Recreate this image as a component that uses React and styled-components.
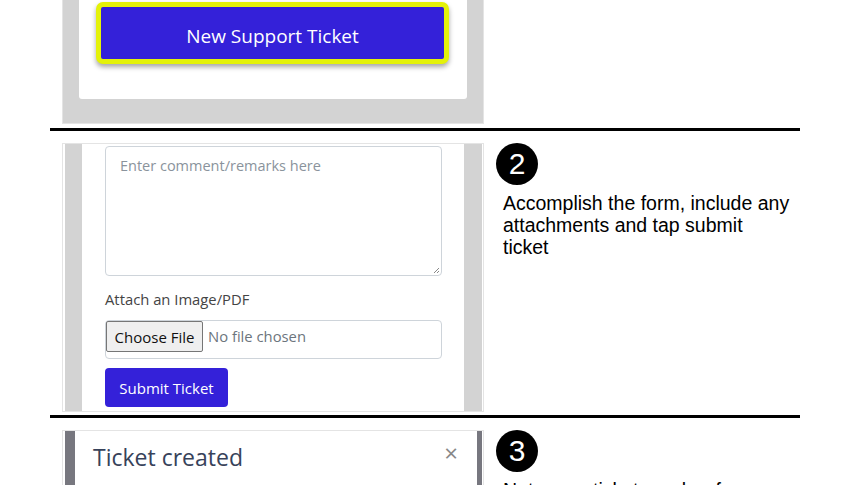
import React from "react";
import styled, { createGlobalStyle } from "styled-components";

const GlobalStyle = createGlobalStyle`
  html, body {
    margin: 0;
    padding: 0;
    background: #ffffff;
    overflow: hidden;
  }
  body {
    font-family: "Liberation Sans", Arial, sans-serif;
  }
`;

const Page = styled.div`
  width: 750px;
  margin: 0 0 0 50px;
`;

const Row = styled.div`
  display: flex;
  padding: ${(p) => (p.first ? "0" : "12px")} 0 ${(p) => p.bottom || 3}px 0;
  border-bottom: 3px solid #000;
`;

const ShotCell = styled.div`
  width: 434px;
  padding-left: 12px;
  flex-shrink: 0;
`;

const StepCell = styled.div`
  flex: 1;
`;

const Badge = styled.div`
  width: 42px;
  height: 42px;
  border-radius: 50%;
  background: #000;
  color: #fff;
  display: flex;
  align-items: center;
  justify-content: center;
  font-size: 30px;
  line-height: 1;
`;

const StepText = styled.p`
  margin: 7px 0 0 7px;
  width: 288px;
  font-size: 19.5px;
  line-height: 22px;
  color: #000;
`;

/* screenshot frames */
const Frame = styled.div`
  width: 422px;
  box-sizing: border-box;
  height: ${(p) => p.h}px;
  background: ${(p) => p.bg || "#d3d3d3"};
  border: 1px solid #e4e4e4;
  border-top: ${(p) => (p.noTop ? "none" : "1px solid #e4e4e4")};
  display: flex;
  padding: 0 ${(p) => p.side || 0}px 0 ${(p) => p.left || 0}px;
  font-family: "Open Sans", "Segoe UI", sans-serif;
  overflow: hidden;
`;

const TopCard = styled.div`
  margin: 0 16px 24px 16px;
  flex: 1;
  background: #fff;
  border-radius: 0 0 3px 3px;
  padding: 2px 18px 0 17px;
`;

const BigButton = styled.button`
  width: 100%;
  height: 62px;
  box-sizing: border-box;
  background: #3421d9;
  border: 5px solid #e4f209;
  border-radius: 7px;
  color: #fff;
  font-family: "Open Sans", "Segoe UI", sans-serif;
  font-size: 19px;
  box-shadow: 0 3px 5px rgba(0, 0, 0, 0.35);
  padding: 5px 0 0;
`;

const Strip = styled.div`
  width: ${(p) => p.w}px;
  background: ${(p) => p.c};
  flex-shrink: 0;
`;

const FormArea = styled.div`
  flex: 1;
  background: #fff;
  padding: 2px 22px 0 23px;
  display: flex;
  flex-direction: column;
`;

const TextArea = styled.div`
  height: 130px;
  border: 1px solid #ced4da;
  border-radius: 4px;
  padding: 9px 14px;
  box-sizing: border-box;
  color: #8a939c;
  font-size: 14.5px;
  position: relative;
`;

const Grip = styled.span`
  position: absolute;
  right: 2px;
  bottom: 2px;
  width: 5px;
  height: 5px;
  background: linear-gradient(135deg, transparent 45%, #888 50%, transparent 60%, transparent 75%, #888 80%, transparent 90%);
`;

const Label = styled.div`
  margin-top: 13px;
  font-size: 14.8px;
  color: #444;
  line-height: 20px;
`;

const FileBox = styled.div`
  margin-top: 11px;
  height: 39px;
  box-sizing: border-box;
  border: 1px solid #ced4da;
  border-radius: 4px;
  display: flex;
  align-items: flex-start;
  gap: 5px;
`;

const ChooseBtn = styled.span`
  width: 97px;
  height: 31px;
  box-sizing: border-box;
  background: #efefef;
  border: 1px solid #767676;
  border-radius: 2px;
  display: flex;
  align-items: center;
  justify-content: center;
  font-size: 15px;
  color: #111;
`;

const NoFile = styled.span`
  line-height: 31px;
  font-size: 14.8px;
  color: #6c757d;
`;

const SubmitBtn = styled.span`
  margin-top: 9px;
  align-self: flex-start;
  width: 123px;
  height: 39px;
  background: #3421d9;
  border-radius: 4px;
  color: #fff;
  font-size: 15px;
  display: flex;
  align-items: center;
  justify-content: center;
`;

const Modal = styled.div`
  flex: 1;
  background: #fff;
  padding: 10px 19px 0 18px;
  display: flex;
  justify-content: space-between;
  align-items: flex-start;
`;

const ModalTitle = styled.div`
  font-size: 23px;
  color: #37425a;
  font-weight: 500;
`;

const Close = styled.span`
  font-size: 24px;
  color: #888;
  line-height: 1;
`;

export default function App() {
  return (
    <>
      <GlobalStyle />
      <Page>
        <Row first bottom={4}>
          <ShotCell>
            <Frame h={124} noTop>
              <TopCard>
                <BigButton>New Support Ticket</BigButton>
              </TopCard>
            </Frame>
          </ShotCell>
          <StepCell />
        </Row>

        <Row bottom={3}>
          <ShotCell>
            <Frame h={269} bg="#fff" left={2} side={1}>
              <Strip w={17} c="#d3d3d3" />
              <FormArea>
                <TextArea>
                  Enter comment/remarks here
                  <Grip />
                </TextArea>
                <Label>Attach an Image/PDF</Label>
                <FileBox>
                  <ChooseBtn>Choose File</ChooseBtn>
                  <NoFile>No file chosen</NoFile>
                </FileBox>
                <SubmitBtn>Submit Ticket</SubmitBtn>
              </FormArea>
              <Strip w={18} c="#d3d3d3" />
            </Frame>
          </ShotCell>
          <StepCell>
            <Badge>2</Badge>
            <StepText>
              Accomplish the form, include any attachments and tap submit ticket
            </StepText>
          </StepCell>
        </Row>

        <Row bottom={3}>
          <ShotCell>
            <Frame h={200} bg="#fff" left={2} side={1}>
              <Strip w={10} c="#77777f" />
              <Modal>
                <ModalTitle>Ticket created</ModalTitle>
                <Close>×</Close>
              </Modal>
              <Strip w={5} c="#77777f" />
            </Frame>
          </ShotCell>
          <StepCell>
            <Badge>3</Badge>
            <StepText>Note your ticket number for future reference</StepText>
          </StepCell>
        </Row>
      </Page>
    </>
  );
}
